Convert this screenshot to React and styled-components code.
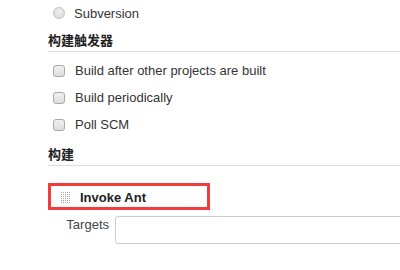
import React from 'react';
import styled, { createGlobalStyle } from 'styled-components';

const GlobalStyle = createGlobalStyle`
  html, body {
    margin: 0;
    padding: 0;
    background: #fff;
    overflow: hidden;
  }
`;

const Page = styled.div`
  width: 400px;
  height: 270px;
  box-sizing: border-box;
  padding-left: 48px;
  font-family: 'Liberation Sans', Arial, sans-serif;
  font-size: 13px;
  color: #333;
  overflow: hidden;
`;

const OptionRow = styled.label`
  display: flex;
  align-items: center;
  gap: ${({ gap }) => gap || 9}px;
  height: ${({ h }) => h || 27}px;
  padding-left: 5px;
  line-height: 15px;
`;

const RadioMark = styled.span`
  width: 12px;
  height: 12px;
  box-sizing: border-box;
  border-radius: 50%;
  border: 1px solid #c4c4c4;
  background: radial-gradient(circle at 50% 35%, #f2f2f2 0%, #dcdcdc 70%, #cfcfcf 100%);
  flex: none;
`;

const CheckMark = styled.span`
  width: 12px;
  height: 12px;
  box-sizing: border-box;
  border-radius: 3px;
  border: 1px solid #a9a9a9;
  background: linear-gradient(#f1f1f1, #dddddd);
  flex: none;
`;

const SectionTitle = styled.div`
  margin-top: ${({ top }) => top}px;
  font-family: 'Liberation Sans', 'Noto Sans CJK SC', sans-serif;
  font-weight: bold;
  font-size: 13px;
  line-height: 17px;
  color: #222;
  padding-bottom: 2px;
  border-bottom: 1px solid #dcdcdc;
`;

const OptionList = styled.div`
  margin-top: 5px;
  display: flex;
  flex-direction: column;
`;

const StepBox = styled.div`
  margin-top: 17px;
  width: 162px;
  height: 27px;
  box-sizing: border-box;
  border: 3px solid #f23b3b;
  display: flex;
  align-items: center;
  padding-left: 10px;
  padding-top: 1px;
  gap: 9px;
`;

const StepName = styled.span`
  font-weight: bold;
  color: #222;
`;

const FieldRow = styled.div`
  margin-top: 6px;
  display: flex;
  align-items: flex-start;
  gap: 6px;
`;

const FieldLabel = styled.span`
  width: 61px;
  flex: none;
  text-align: right;
  padding-top: 1px;
  line-height: 15px;
  color: #444;
`;

const TextInput = styled.input`
  width: 300px;
  height: 28px;
  box-sizing: border-box;
  border: 1px solid #cccccc;
  border-radius: 3px;
  flex: none;
  outline: none;
`;

const DragHandle = () => (
  <svg width="10" height="13" viewBox="0 0 10 13">
    {Array.from({ length: 6 }).map((_, r) =>
      Array.from({ length: 5 }).map((_, c) => (
        <rect key={`${r}-${c}`} x={c * 2} y={r * 2 + 1} width="1" height="1" fill="#a8a8a8" />
      ))
    )}
  </svg>
);

const triggers = ['Build after other projects are built', 'Build periodically', 'Poll SCM'];

const App = () => (
  <>
    <GlobalStyle />
    <Page>
      <OptionRow h={26} gap={9}>
        <RadioMark />
        <span>Subversion</span>
      </OptionRow>

      <SectionTitle top={6}>构建触发器</SectionTitle>
      <OptionList>
        {triggers.map(t => (
          <OptionRow key={t} gap={10}>
            <CheckMark />
            <span>{t}</span>
          </OptionRow>
        ))}
      </OptionList>

      <SectionTitle top={8}>构建</SectionTitle>

      <StepBox>
        <DragHandle />
        <StepName>Invoke Ant</StepName>
      </StepBox>

      <FieldRow>
        <FieldLabel>Targets</FieldLabel>
        <TextInput type="text" />
      </FieldRow>
    </Page>
  </>
);

export default App;
